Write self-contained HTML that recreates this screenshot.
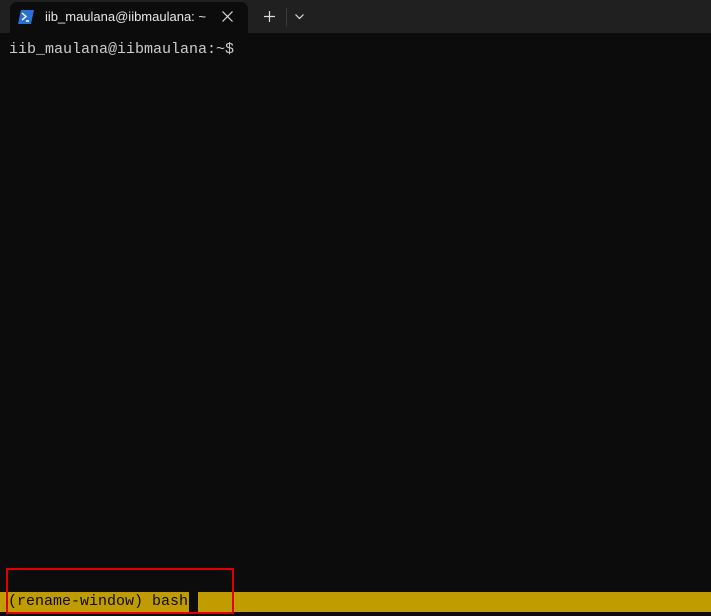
<!DOCTYPE html>
<html><head><style>
html,body{margin:0;padding:0;width:711px;height:616px;background:#0c0c0c;overflow:hidden;position:relative;font-family:"Liberation Mono",monospace}
.bar{position:absolute;left:0;top:0;width:711px;height:33px;background:#202020}
.tab{position:absolute;left:10px;top:2px;width:238px;height:31px;background:#0c0c0c;border-radius:7px 7px 0 0}
.tt{position:absolute;left:45px;top:9px;font:13px "Liberation Sans",sans-serif;color:#e8e8e8}
.t{position:absolute;left:9px;font-size:15px;color:#cccccc;white-space:pre;line-height:20px}
.y{position:absolute;top:592px;height:20px;background:#c19c00}
</style></head><body>
<div class="bar"></div>
<div class="tab"></div>
<svg style="position:absolute;left:18px;top:10px" width="16" height="14"><path d="M3 0H16L13 14H0Z" fill="#2a6fd6"/><path d="M4 3L8 6.5L4 10M8 11H11" stroke="#fff" stroke-width="1.4" fill="none"/></svg>
<div class="tt">iib_maulana@iibmaulana: ~</div>
<svg style="position:absolute;left:222px;top:11px" width="11" height="11"><path d="M0.5 0.5L10.5 10.5M10.5 0.5L0.5 10.5" stroke="#ddd" stroke-width="1.2"/></svg>
<svg style="position:absolute;left:264px;top:11px" width="11" height="11"><path d="M5.5 0V11M0 5.5H11" stroke="#ddd" stroke-width="1.2"/></svg>
<div style="position:absolute;left:286px;top:8px;width:1px;height:18px;background:#3a3a3a"></div>
<svg style="position:absolute;left:295px;top:14px" width="9" height="6"><path d="M0.5 0.5L4.5 4.5L8.5 0.5" stroke="#ddd" stroke-width="1.2" fill="none"/></svg>
<div class="t" style="top:40px">iib_maulana@iibmaulana:~$</div>
<div class="y" style="left:0;width:189px"></div>
<div class="y" style="left:198px;width:513px"></div>
<div class="t" style="top:592px;left:8px;color:#0c0c0c">(rename-window) bash</div>
<div style="position:absolute;left:6px;top:568px;width:224px;height:42px;border:2px solid #e00000"></div>
</body></html>
